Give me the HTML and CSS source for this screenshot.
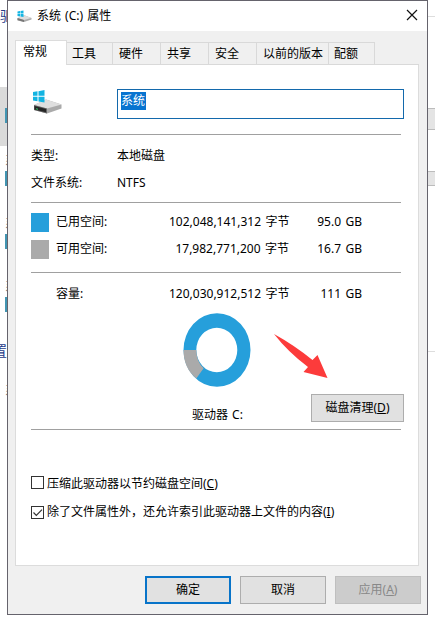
FILE: index.html
```html
<!DOCTYPE html>
<html lang="zh-CN">
<head>
<meta charset="utf-8">
<title>系统 (C:) 属性</title>
<link rel="stylesheet" href="styles.css">
</head>
<body>
<div class="desktop">
  <aside class="behind-left">
    <span class="group-heading">驱</span>
    <div class="drive selected"><span>系</span><i></i></div>
    <div class="drive"><span>系</span><i></i></div>
    <div class="drive"><span>系</span><i></i></div>
    <div class="drive"><span>系</span><i></i></div>
    <span class="group-heading second">置</span>
    <span class="remnant">系</span>
  </aside>
  <main class="dialog">
    <header class="titlebar">
      <svg class="title-icon" viewBox="0 0 30 24">
        <path d="M1 16 13 9l16 6v3L14 23 1 20z" fill="#aaa"/><path d="M1 15 13 9l16 6-15 4z" fill="#ddd"/><path d="M1 15l13 4v4L1 19z" fill="#777"/>
        <path d="M1 2l5-1v5H1zM7 1l6-1v6H7zM1 7h5v5l-5-1zM7 7h6v6l-6-1z" fill="#13b5e3"/>
      </svg>
      <h1>系统 (C:) 属性</h1>
      <svg class="close" viewBox="0 0 12 12"><path d="M1 1l10 10M11 1L1 11" stroke="#111" stroke-width="1.2"/></svg>
    </header>
    <nav class="tabs">
      <span class="tab active">常规</span><span class="tab">工具</span><span class="tab w48">硬件</span><span class="tab w48">共享</span><span class="tab w48">安全</span><span class="tab w72">以前的版本</span><span class="tab">配额</span>
    </nav>
    <section class="panel">
      <div class="name-row">
        <svg class="drive-icon" viewBox="0 0 30 24">
          <path d="M1 15 13 9.500l15.500 5v4L14 23.500 1 20z" fill="#aaa"/>
          <path d="M1 15 13 9.500l15.500 5L14 18.500z" fill="#dedede"/>
          <path d="M1 15l13 3.500v5L1 20z" fill="#666"/><path d="M1.500 16l11.500 3v3.200L1.500 19.500z" fill="#252525"/><path d="M3 18.200l2 .5v1l-2-.5z" fill="#3c6"/>
          <path d="M0 2l4.500-.7v4.400H0zM5.500 1.200 11.500 0v5.700h-6zM0 6.700h4.500v4.500L0 10.500zM5.500 6.700h6v5.800l-6-1z" fill="#12b4e2"/>
        </svg>
        <div class="name-input"><span>系统</span></div>
      </div>
      <dl class="facts">
        <dt>类型:</dt><dd>本地磁盘</dd>
        <dt>文件系统:</dt><dd>NTFS</dd>
      </dl>
      <div class="usage">
        <i class="swatch used"></i><span>已用空间:</span><span class="num">102,048,141,312 字节</span><span class="num">95.0 GB</span>
        <i class="swatch free"></i><span>可用空间:</span><span class="num">17,982,771,200 字节</span><span class="num">16.7 GB</span>
      </div>
      <div class="capacity">
        <div class="usage total"><i></i><span>容量:</span><span class="num">120,030,912,512 字节</span><span class="num">111 GB</span></div>
        <svg class="ring" viewBox="0 0 68 74">
          <path fill-rule="evenodd" fill="#269fdb" d="M.5 37a33.500 36.700 0 1 1 67 0a33.500 36.700 0 1 1-67 0M13.300 37a20.500 22.300 0 1 0 41 0a20.500 22.300 0 1 0-41 0"/>
          <path fill="#aaa" d="M.5 37H13.300Q13.400 48.500 20.600 55.300L13.300 65.500Q.5 55 .5 37"/>
        </svg>
        <div class="cleanup">
          <span class="drive-name">驱动器 C:</span>
          <button class="btn wide">磁盘清理(<u>D</u>)</button>
        </div>
        <svg class="arrow" viewBox="0 0 54 45"><path d="M0 0Q20 11 38.500 26L43.500 21 53.500 44 29.500 38 34 33Q14 18 0 0" fill="#fc3b3b"/></svg>
      </div>
      <div class="options">
        <label><i class="box"></i><span>压缩此驱动器以节约磁盘空间(<u>C</u>)</span></label>
        <label class="checked"><i class="box"><svg viewBox="0 0 11 11"><path d="M1.500 5.500l2.800 2.800L10 2.600" fill="none" stroke="#333" stroke-width="1.2"/></svg></i><span>除了文件属性外，还允许索引此驱动器上文件的内容(<u>I</u>)</span></label>
      </div>
    </section>
    <footer class="actions">
      <button class="btn default">确定</button>
      <button class="btn">取消</button>
      <button class="btn" disabled>应用(<u>A</u>)</button>
    </footer>
  </main>
  <aside class="behind-right"><i class="line"></i><i class="bar"></i><i class="bar low"></i><i class="line end"></i></aside>
</div>
</body>
</html>
```
FILE: styles.css
```css
* { box-sizing: border-box; }
body { margin: 0; background: #fff; color: #000; font: 12px/18px "Noto Sans", "Noto Sans CJK SC", sans-serif; overflow: hidden; }
i { display: block; }
svg { display: block; }
.desktop { display: grid; grid-template-columns: 7px 421px 7px; height: 622px; }

.behind-left { display: flex; flex-direction: column; align-items: flex-end; overflow: hidden; }
.group-heading { align-self: flex-start; height: 20px; margin-top: 6px; color: #253b88; font-size: 14px; line-height: 20px; }
.group-heading.second { align-self: flex-end; margin-top: 2px; }
.drive { width: 7px; height: 63px; padding-top: 4px; flex: none; overflow: hidden; }
.drive.selected { height: 59px; margin: 61px 0 4px; padding-top: 4px; background: #dadada; }
.drive span, .remnant { display: block; width: 2px; height: 14px; margin-left: 5px; overflow: hidden; color: #777; line-height: 14px; }
.drive i { width: 2px; height: 15px; margin: 3px 0 0 5px; background: #4295b2; }
.drive.selected span { visibility: hidden; }
.remnant { margin-top: 23px; }

.dialog { height: 615px; border: 1px solid #65636c; background: #f0f0f0; }
.titlebar { display: flex; align-items: center; height: 30px; padding: 0 8px; background: #fff; }
.title-icon { width: 15px; height: 13px; margin: 1px 5px 0 1px; }
.titlebar h1 { flex: 1; margin: 0; font-size: 12px; font-weight: 400; word-spacing: 1px; }
.close { width: 12px; height: 12px; margin: 0 1px 2px 0; }
.tabs { display: flex; align-items: flex-end; height: 34px; padding: 0 8px 0 7px; }
.tabs::after { content: ""; flex: 1; border-bottom: 1px solid #d9d9d9; }
.tab { width: 46px; height: 23px; padding-left: 5px; border: 1px solid #d9d9d9; border-left: 0; line-height: 21px; white-space: nowrap; }
.tab.active { width: 52px; height: 25px; padding-left: 7px; border: 1px solid #dcdcdc; border-bottom: 0; background: #fff; line-height: 21px; }
.tab.w48 { width: 48px; padding-left: 6px; }
.tab.w72 { width: 72px; padding-left: 6px; }

.panel { height: 501px; margin: 0 8px 0 7px; padding: 24px 14px 0 15px; border: 1px solid #dcdcdc; border-top: 0; background: #fff; }
.name-row { display: flex; height: 45px; margin-right: -1px; }
.drive-icon { width: 30px; height: 24px; margin: 1px 54px 0 2px; }
.name-input { width: 287px; height: 30px; padding: 2px 3px; border: 1px solid #1369ac; }
.name-input span { display: inline-block; width: 25px; height: 18px; background: #0874d0; color: #fff; }
.facts { display: grid; grid-template-columns: 86px 1fr; grid-auto-rows: 27px; width: 370px; height: 68px; margin: 0; padding-top: 12px; border-top: 1px solid #a0a0a0; }
.facts dd { margin: 0; }
.usage { display: grid; grid-template-columns: 25px 113px 120px 73px; grid-auto-rows: 27px; width: 370px; height: 70px; padding-top: 10px; border-top: 1px solid #a0a0a0; }
.num { text-align: right; white-space: nowrap; word-spacing: 1.3px; }
.swatch { width: 18px; height: 19px; }
.used { background: #269fdb; }
.free { background: #aaa; }
.capacity { position: relative; width: 374px; height: 157px; }
.usage.total { height: 41px; padding-top: 12px; }
.ring { width: 68px; height: 74px; margin-left: 151.5px; }
.cleanup { display: flex; width: 373px; margin-top: 7px; padding-left: 160px; }
.drive-name { width: 120px; margin-top: 12px; padding-left: 1px; word-spacing: 1px; }
.arrow { position: absolute; left: 243px; top: 62px; width: 54px; height: 45px; }
.options { width: 370px; padding-top: 44px; border-top: 1px solid #a0a0a0; }
.options label { display: flex; height: 28px; white-space: nowrap; }
.options label > span { margin-top: 1px; }
.box { width: 13px; height: 13px; margin: 2px 3px 0 0; flex: none; border: 1px solid #333; background: #fff; }
.checked .box { margin-top: 4px; }

.btn { width: 86px; height: 28px; padding: 0 0 1px; border: 1px solid #adadad; background: #e1e1e1; color: #000; font: inherit; white-space: nowrap; }
.btn.wide { width: 93px; }
.btn.default { border: 2px solid #0874c9; }
.btn:disabled { border-color: #bfbfbf; background: #ccc; color: #888; }
u { text-underline-offset: 1px; }
.actions { display: flex; justify-content: flex-end; gap: 9px; padding: 10px 7px 0 0; margin-right: -1px; }

.behind-right { padding-top: 16px; }
.line { height: 1px; background: #ddd; }
.bar { height: 22px; margin-top: 91px; border: solid #bcbcbc; border-width: 1px 0; background: #e4e4e4; }
.bar.low { height: 15px; margin-top: 41px; }
.line.end { margin-top: 165px; }
```
